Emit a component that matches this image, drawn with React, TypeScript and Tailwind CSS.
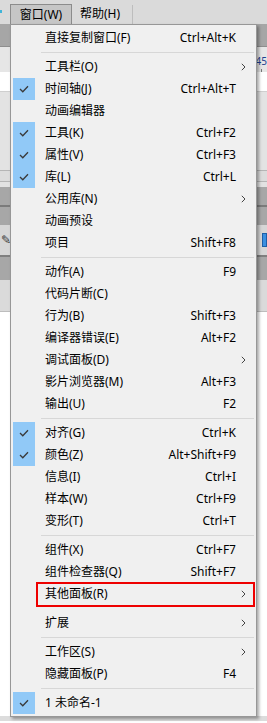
import React from 'react'

type Item =
  | { sep: true; hideLine?: boolean }
  | { sep?: false; label: string; keys?: string; checked?: boolean; sub?: boolean; marked?: boolean }

const items: Item[] = [
  { label: '直接复制窗口(F)', keys: 'Ctrl+Alt+K' },
  { sep: true },
  { label: '工具栏(O)', sub: true },
  { label: '时间轴(J)', keys: 'Ctrl+Alt+T', checked: true },
  { label: '动画编辑器' },
  { label: '工具(K)', keys: 'Ctrl+F2', checked: true },
  { label: '属性(V)', keys: 'Ctrl+F3', checked: true },
  { label: '库(L)', keys: 'Ctrl+L', checked: true },
  { label: '公用库(N)', sub: true },
  { label: '动画预设' },
  { label: '项目', keys: 'Shift+F8' },
  { sep: true },
  { label: '动作(A)', keys: 'F9' },
  { label: '代码片断(C)' },
  { label: '行为(B)', keys: 'Shift+F3' },
  { label: '编译器错误(E)', keys: 'Alt+F2' },
  { label: '调试面板(D)', sub: true },
  { label: '影片浏览器(M)', keys: 'Alt+F3' },
  { label: '输出(U)', keys: 'F2' },
  { sep: true },
  { label: '对齐(G)', keys: 'Ctrl+K', checked: true },
  { label: '颜色(Z)', keys: 'Alt+Shift+F9', checked: true },
  { label: '信息(I)', keys: 'Ctrl+I' },
  { label: '样本(W)', keys: 'Ctrl+F9' },
  { label: '变形(T)', keys: 'Ctrl+T' },
  { sep: true },
  { label: '组件(X)', keys: 'Ctrl+F7' },
  { label: '组件检查器(Q)', keys: 'Shift+F7' },
  { label: '其他面板(R)', sub: true, marked: true },
  { sep: true, hideLine: true },
  { label: '扩展', sub: true },
  { sep: true },
  { label: '工作区(S)', sub: true },
  { label: '隐藏面板(P)', keys: 'F4' },
  { sep: true },
  { label: '1 未命名-1', checked: true },
]

const CheckMark = () => (
  <svg width="10" height="8" viewBox="0 0 10 8" fill="none">
    <path d="M1 4 L3.8 6.8 L9 1.2" stroke="#3a3a3a" strokeWidth="1.3" />
  </svg>
)

const Chevron = () => (
  <svg width="5" height="8" viewBox="0 0 5 8" fill="none">
    <path d="M0.8 0.8 L4 4 L0.8 7.2" stroke="#444" strokeWidth="1" />
  </svg>
)

const MenuRow = ({ item }: { item: Item }) => {
  if (item.sep) {
    return (
      <div className="h-[7px] flex items-center pl-[28px]">
        <div className={item.hideLine ? 'h-px w-full' : 'h-px w-full bg-[#d7d7d7]'} />
      </div>
    )
  }
  return (
    <div className="relative h-[22px] flex items-center">
      <div className={`w-[22px] h-full flex items-center justify-center ${item.checked ? 'bg-[#91c9f7]' : ''}`}>
        {item.checked && <CheckMark />}
      </div>
      <span className="ml-[10px] flex-1 whitespace-nowrap">{item.label}</span>
      <span className="whitespace-nowrap text-right">{item.keys}</span>
      <div className="w-[18px] h-full flex items-center pl-[5px]">{item.sub && <Chevron />}</div>
      {item.marked && (
        <div className="absolute left-[23px] top-[-1px] w-[219px] h-[25px] border-2 border-[#ee0000]" />
      )}
    </div>
  )
}

export default function App() {
  return (
    <div
      className="relative w-[267px] h-[723px] overflow-hidden bg-white text-[12px] leading-none text-black"
      style={{ fontFamily: '"Noto Sans", "Noto Sans CJK SC", sans-serif' }}
    >
      {/* app background behind the menu */}
      <div className="flex flex-col h-full">
        <div className="h-[24px] bg-[#dadada] flex items-end relative">
          <div className="absolute left-0 top-[10px] w-[2px] h-[3px] bg-[#3fb4d8]" />
          <div className="ml-[10px] h-[20px] w-[62px] bg-[#c6c6c6] border border-[#8c8c8c] border-b-0 flex items-center justify-center">
            窗口(W)
          </div>
          <div className="ml-[8px] h-[20px] flex items-center">帮助(H)</div>
          <div className="ml-[12px] h-[19px] w-px bg-[#bdbdbd]" />
        </div>
        <div className="h-[23px] bg-[#a6a6a6] border-b border-[#8e8e8e]" />
        <div className="h-[25px] bg-[#e6e6e6] flex justify-end items-end relative">
          <span className="absolute right-0 top-[9px] text-[10px] text-[#1f3f8f]">45</span>
          <div className="w-px h-[3px] bg-[#777] mr-[5px]" />
        </div>
        <div className="h-[20px] bg-white border-b border-[#cfcfcf]" />
        <div className="h-[78px] bg-[#e3e3e3]" />
        <div className="h-[12px] bg-[#dcdcdc] border-y border-[#b5b5b5]" />
        <div className="h-[5px] bg-[#e2e2e2]" />
        <div className="h-[18px] bg-[#a7a7a7]" />
        <div className="h-[2px] bg-[#7b7b7b]" />
        <div className="h-[18px] bg-[#a7a7a7]" />
        <div className="h-[30px] bg-[#d6d6d6] flex items-center justify-between">
          <span className="text-[12px] text-[#333] ml-[1px]">✎</span>
          <div className="w-[5px] h-[14px] bg-[#3b8fe0] border border-[#1d5fa8]" />
        </div>
        <div className="h-[2px] bg-[#7f7f7f]" />
        <div className="h-[23px] bg-[#a7a7a7]" />
        <div className="h-[32px] bg-[#dadada] border-b border-[#bdbdbd]" />
        <div className="flex-1 bg-white" />
        <div className="h-[5px] bg-[#dcdcdc]" />
        <div className="h-[2px] bg-white" />
      </div>

      {/* dropdown menu */}
      <div className="absolute left-[10px] top-[24px] w-[247px] bg-[#f0f0f0] border border-[#979797] p-[2px] shadow-[2px_2px_3px_rgba(0,0,0,0.35)]">
        {items.map((it, i) => (
          <MenuRow key={i} item={it} />
        ))}
      </div>
    </div>
  )
}
